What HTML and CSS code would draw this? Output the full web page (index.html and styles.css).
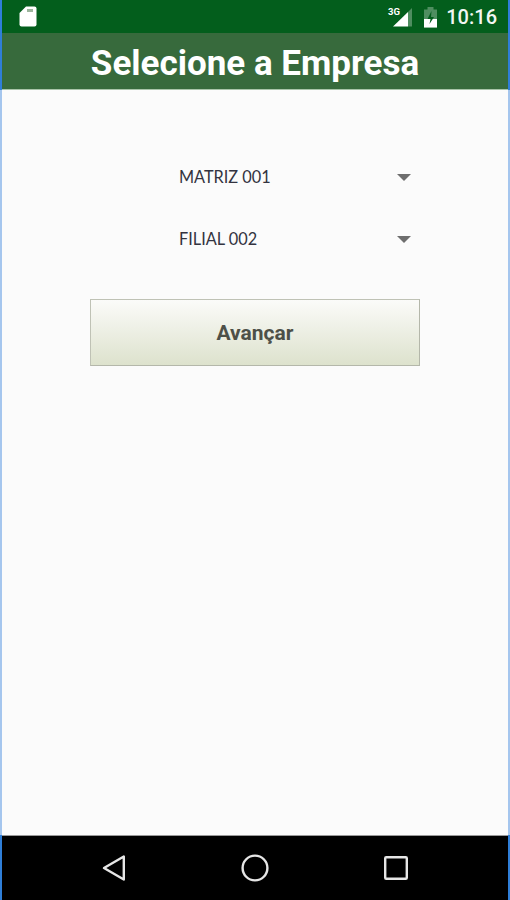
FILE: index.html
```html
<!DOCTYPE html>
<html lang="pt">
<head>
  <meta charset="UTF-8" />
  <meta name="viewport" content="width=device-width, initial-scale=1" />
  <title>Selecione a Empresa</title>
  <link rel="stylesheet" href="styles.css">
</head>
<body>
  <div class="screen">
    <div class="status-bar">
      <svg class="sd-icon" width="18" height="21" viewBox="0 0 18 21">
        <path d="M7 0.5H15.5Q17.5 0.5 17.5 2.5V18.5Q17.5 20.5 15.5 20.5H2.5Q0.5 20.5 0.5 18.5V7Z" fill="#fff"/>
        <rect x="8" y="3" width="6" height="3" fill="#9db59d"/>
      </svg>
      <div class="status-right">
        <svg class="signal-icon" width="27" height="21" viewBox="0 0 27 21">
          <path d="M6 20.5L21 6V20.5Z" fill="#fff"/>
          <path d="M21 6L25 2V20.5H21Z" fill="#fff" opacity="0.3"/>
          <text x="1" y="9" class="signal-text">3G</text>
        </svg>
        <svg class="battery-icon" width="15" height="22" viewBox="0 0 15 22">
          <path d="M1 3.5H4.5V1H10.5V3.5H14V21.5H1Z" fill="#fff" opacity="0.3"/>
          <path d="M1 13H14V21.5H1Z" fill="#fff"/>
          <path d="M8.5 5L4.5 13H7.5L6.5 18L11 11H8Z" fill="#035e1c"/>
        </svg>
        <span class="clock">10:16</span>
      </div>
    </div>

    <div class="title-bar">
      <h1>Selecione a Empresa</h1>
    </div>

    <div class="content">
      <div class="picker">
        <span>MATRIZ 001</span>
        <span class="arrow"></span>
      </div>
      <div class="picker">
        <span>FILIAL 002</span>
        <span class="arrow"></span>
      </div>
      <button class="next-button">Avançar</button>
    </div>

    <div class="nav-bar">
      <svg width="24" height="28" viewBox="0 0 24 28">
        <path d="M21.8 2.5V25.5L2 14Z" fill="none" stroke="#e6e6e6" stroke-width="2.4" stroke-linejoin="round"/>
      </svg>
      <svg width="28" height="28" viewBox="0 0 28 28">
        <circle cx="14" cy="14" r="12.4" fill="none" stroke="#e6e6e6" stroke-width="2.4"/>
      </svg>
      <svg width="24" height="24" viewBox="0 0 24 24">
        <rect x="1.2" y="1.2" width="21.6" height="21.6" rx="1" fill="none" stroke="#e6e6e6" stroke-width="2.4"/>
      </svg>
    </div>
  </div>
</body>
</html>
```

FILE: styles.css
```css
body {
  margin: 0;
  font-family: Roboto, "Liberation Sans", sans-serif;
  background-color: #2f7ed8;
}
.screen {
  display: flex;
  flex-direction: column;
  height: 900px;
  margin: 0 2px;
}
.status-bar {
  display: flex;
  justify-content: space-between;
  align-items: center;
  height: 33px;
  padding: 0 11px 0 17px;
  background-color: #035e1c;
  box-sizing: border-box;
}
.status-right {
  display: flex;
  align-items: center;
}
.signal-icon {
  margin-right: 9px;
}
.signal-text {
  font-family: Roboto, sans-serif;
  font-size: 9.5px;
  font-weight: 700;
  fill: #fff;
}
.battery-icon {
  margin-right: 8px;
}
.clock {
  color: #f2f6f2;
  font-size: 20px;
  font-weight: 500;
}
.title-bar {
  height: 57px;
  background-color: #376a3c;
  border-bottom: 1px solid #a9c4a9;
  box-sizing: border-box;
  text-align: center;
}
h1 {
  margin: 0;
  color: #fff;
  font-size: 35px;
  font-weight: 700;
  line-height: 61px;
}
.content {
  flex: 1;
  display: flex;
  flex-direction: column;
  margin: 0 -2px;
  padding: 56px 88px 0;
  background-color: #fbfbfb;
  border-left: 2px solid #a5c6ee;
  border-right: 2px solid #a5c6ee;
}
.picker {
  display: flex;
  justify-content: space-between;
  align-items: center;
  height: 62px;
  padding: 0 9px 0 89px;
  box-sizing: border-box;
  color: #333340;
  font-family: Lato, "Liberation Sans", sans-serif;
  font-size: 16.3px;
}
.picker span:first-child {
  margin-top: -2px;
}
.arrow {
  width: 0;
  height: 0;
  border-left: 7px solid transparent;
  border-right: 7px solid transparent;
  border-top: 7px solid #6e6e6e;
}
.next-button {
  height: 67px;
  margin-top: 29px;
  border: 1px solid #bfc2b5;
  border-right-color: #b4b7aa;
  border-bottom-color: #b4b7aa;
  background: linear-gradient(to bottom, #fbfbf9, #dde2cd);
  color: #4d5048;
  font-family: Roboto, sans-serif;
  font-size: 21px;
  font-weight: 700;
}
.nav-bar {
  display: flex;
  justify-content: center;
  align-items: center;
  gap: 115px;
  height: 65px;
  padding-right: 1px;
  background-color: #000;
  border-top: 1px solid #999;
  box-sizing: border-box;
}
```
